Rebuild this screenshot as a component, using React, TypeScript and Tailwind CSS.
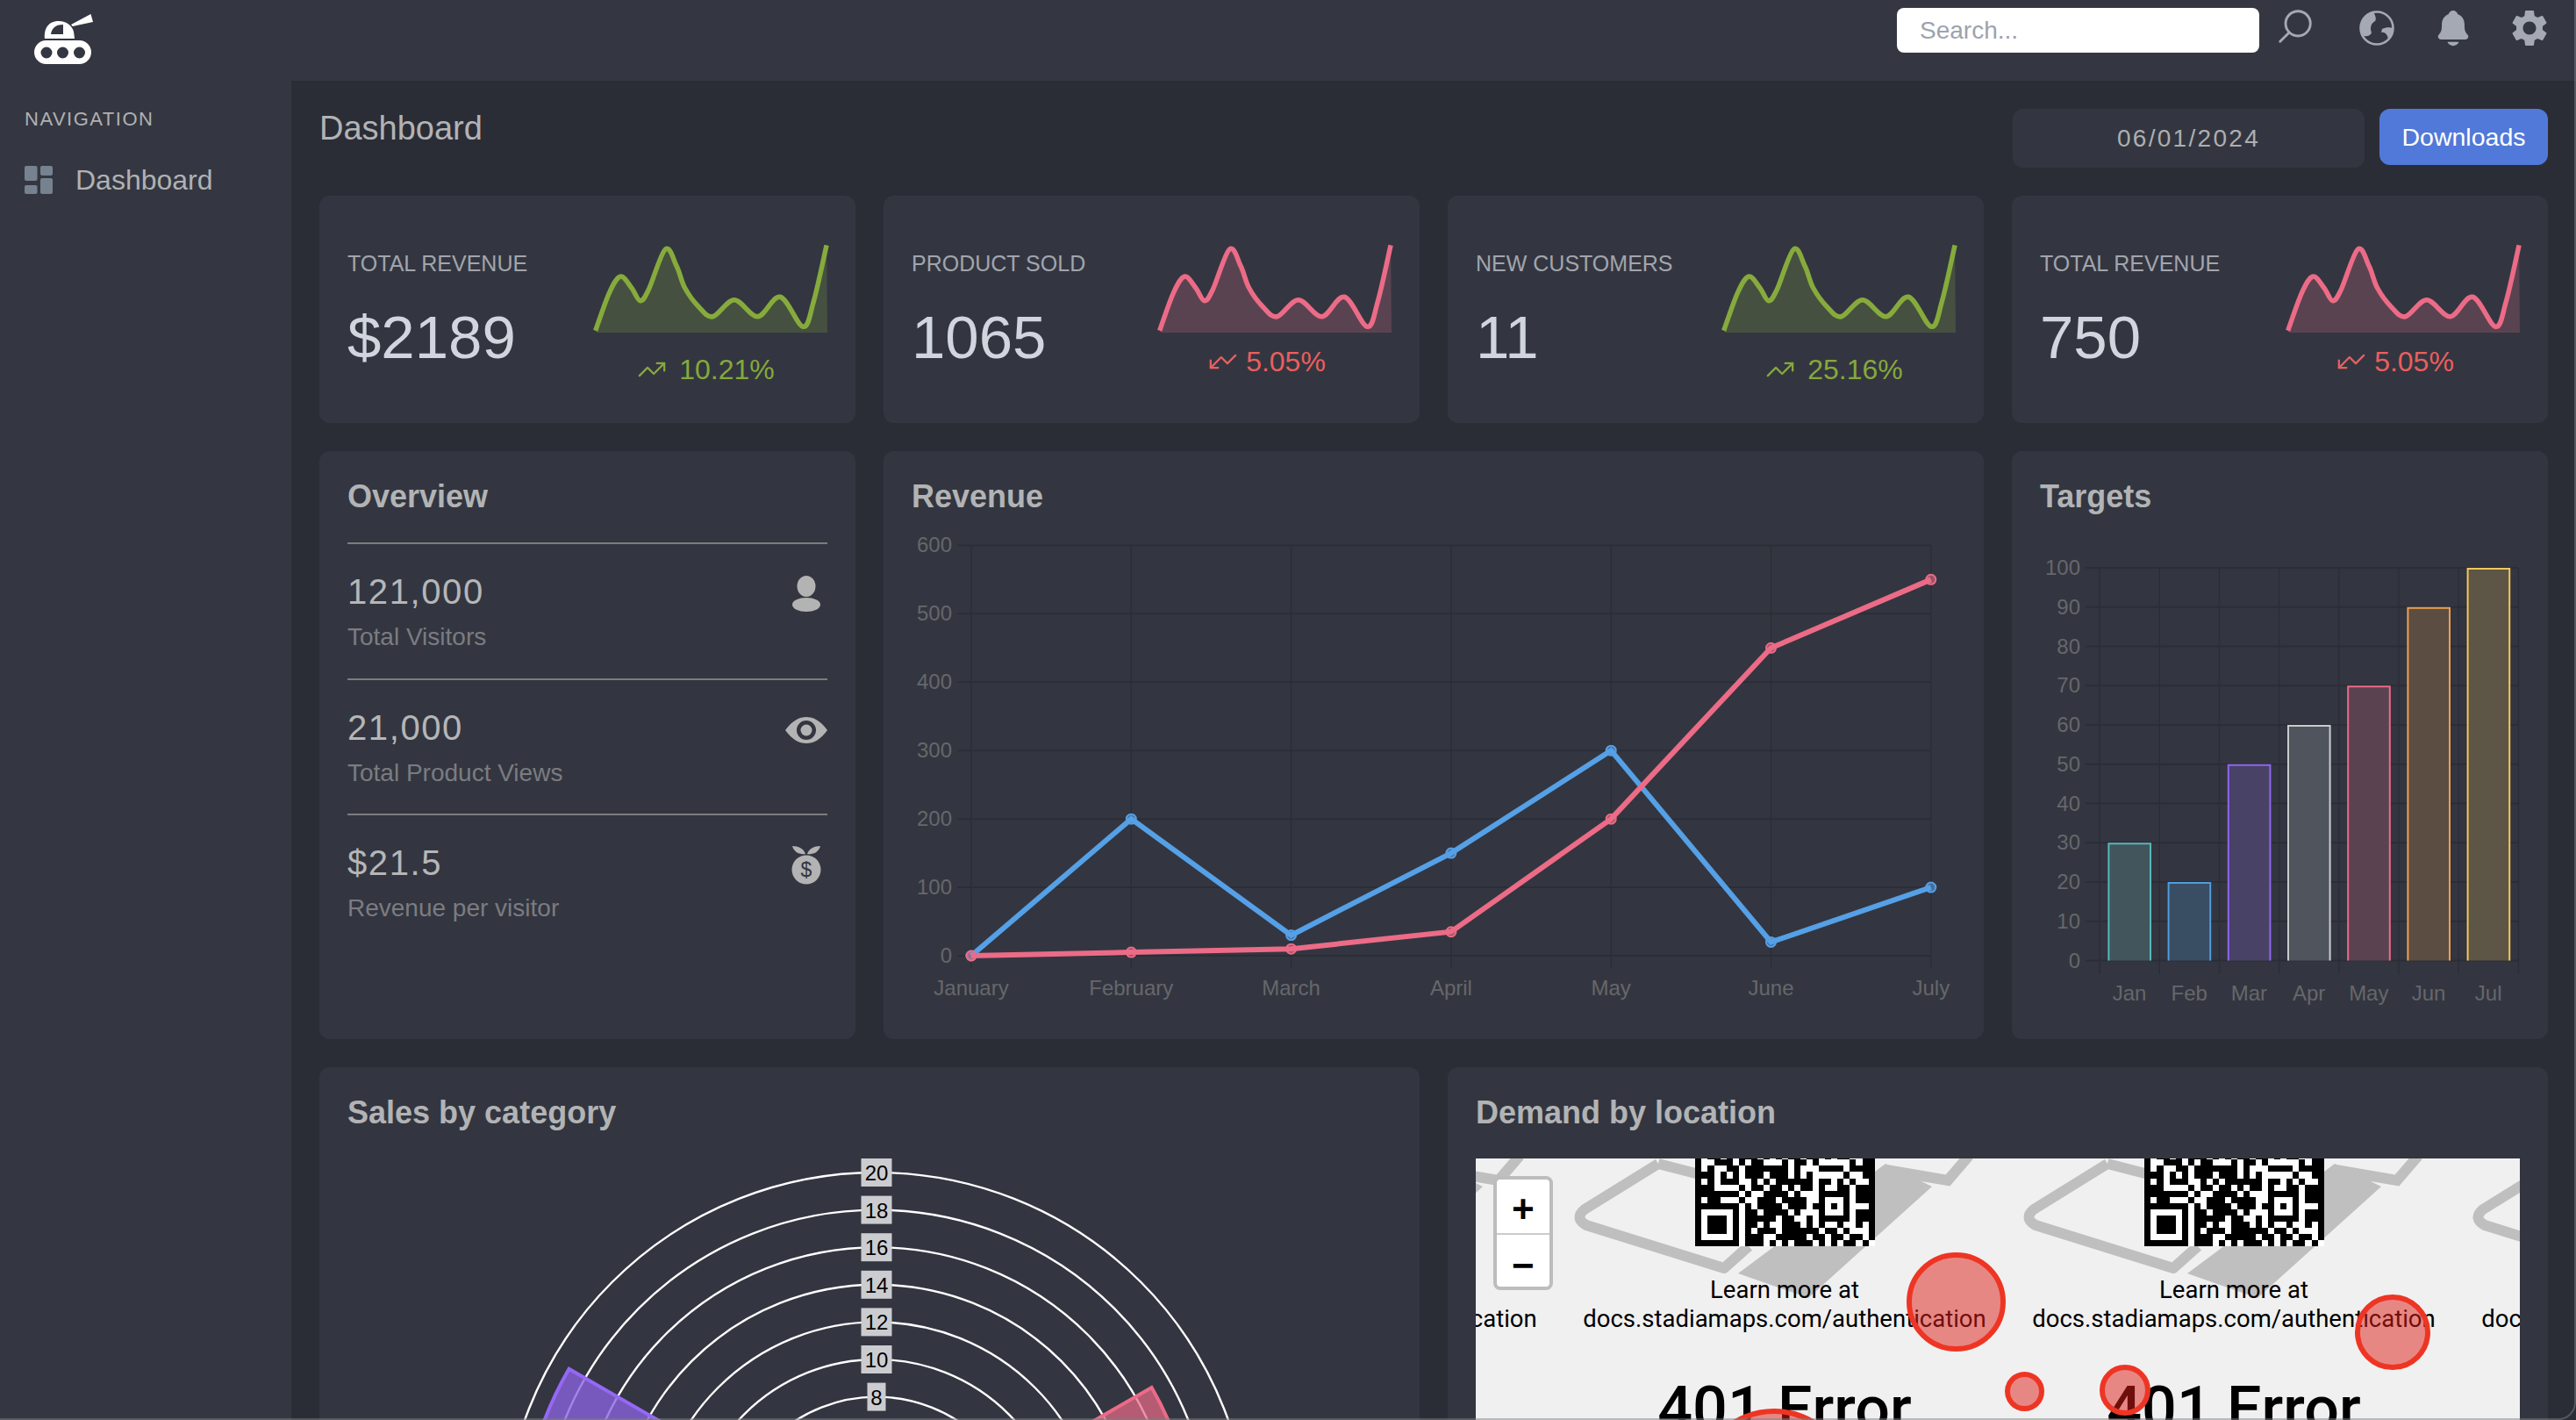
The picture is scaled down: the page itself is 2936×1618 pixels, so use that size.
import { TrendingUp } from "lucide-react";
import { IoNotifications, IoSearchOutline } from "react-icons/io5";
import { MdSettings } from "react-icons/md";

// sparkline shape, page coords of the first card
const spark: [number, number][] = [
    [678.7, 376.7], [694.6, 333.3], [707.4, 315], [720, 328.3], [729.7, 342.7], [739.3, 330],
    [758.4, 284], [771.2, 303.3], [780.7, 328.3], [796.7, 350], [812.6, 360.7], [836.9, 341.7],
    [863.6, 360.7], [889.2, 338.3], [915.3, 372.3], [927.4, 343.3], [942.1, 279.3],
];

function smooth(pts: [number, number][]) {
    let d = `M${pts[0][0]} ${pts[0][1]}`;
    for (let i = 0; i < pts.length - 1; i++) {
        const p0 = pts[Math.max(i - 1, 0)];
        const p1 = pts[i];
        const p2 = pts[i + 1];
        const p3 = pts[Math.min(i + 2, pts.length - 1)];
        const c1x = p1[0] + (p2[0] - p0[0]) / 6;
        const c1y = p1[1] + (p2[1] - p0[1]) / 6;
        const c2x = p2[0] - (p3[0] - p1[0]) / 6;
        const c2y = p2[1] - (p3[1] - p1[1]) / 6;
        d += ` C${c1x} ${c1y} ${c2x} ${c2y} ${p2[0]} ${p2[1]}`;
    }
    return d;
}

function Sparkline({ color, fill }: { color: string; fill: string }) {
    const line = smooth(spark);
    return (
        <svg viewBox="675 276 268 106" className="block w-[268px] h-[106px] overflow-visible">
            <path d={`${line} L943 379 L680 379 Z`} fill={fill} />
            <path d={line} fill="none" stroke={color} strokeWidth="5.5" strokeLinejoin="round" />
        </svg>
    );
}

function Logo() {
    return (
        <svg viewBox="38 16 68 58" className="w-[68px] h-[58px] text-white" fill="currentColor">
            <path d="M81 28 L103.5 16 L106 25 L82.6 30 Z" />
            <path fillRule="evenodd" d="M51 44 C50 34 54 24 67 24 C76 24 82 29 84 36 L85 44 Z M58 39 H72 V28 C65 28 59 31 58 39 Z" />
            <path fillRule="evenodd" d="M52.5 46 H90.5 A13.5 13.5 0 0 1 90.5 73 H52.5 A13.5 13.5 0 0 1 52.5 46 Z M53 53.5 A6.5 6.5 0 1 0 53 66.5 A6.5 6.5 0 1 0 53 53.5 Z M71.5 53.5 A6.5 6.5 0 1 0 71.5 66.5 A6.5 6.5 0 1 0 71.5 53.5 Z M90.5 53.5 A6.5 6.5 0 1 0 90.5 66.5 A6.5 6.5 0 1 0 90.5 53.5 Z" />
        </svg>
    );
}

function GlobeIcon() {
    return (
        <svg viewBox="0 0 40 40" className="w-[40px] h-[40px]" fill="#a5a9b3">
            <circle cx="20" cy="20" r="18.5" fill="none" stroke="#a5a9b3" strokeWidth="2.6" />
            <path d="M16 1 C8 2 1 10 1 20 C1 24 2 27 4 29 C8 30 13 29 14 25 C12 20 13 15 18 12 C20 10 18 5 16 1 Z" />
            <path d="M26 21 C30 19 35 19 39 20 C39 26 36 31 33 34 C33 29 30 24 25 25 Z" />
        </svg>
    );
}

function StatCard({ title, value, pct, up }: { title: string; value: string; pct: string; up: boolean }) {
    return (
        <div className="h-[259px] rounded-xl bg-[#333640] px-8 flex justify-between">
            <div className="pt-[61px]">
                <p className="text-[25px] leading-[32px] text-[#a2a5ad] whitespace-nowrap">{title}</p>
                <p className="mt-[29px] text-[69px] leading-[80px] text-[#d1d5de]">{value}</p>
            </div>
            <div className="pt-[53px] w-[268px] shrink-0">
                <Sparkline color={up ? "#86ab3c" : "#ec6b87"} fill={up ? "#465040" : "#5a4350"} />
                <div className={up ? "mt-[21px] flex items-center justify-center gap-[14px] text-[32px] leading-[36px] text-[#86a83c] pr-[9px]" : "mt-[12px] flex items-center justify-center gap-[9px] text-[32px] leading-[36px] text-[#e95f5f] pr-[16px]"}>
                    <TrendingUp className={up ? "w-[34px] h-[34px]" : "w-[34px] h-[34px] rotate-180"} strokeWidth={1.6} />
                    <span>{pct}</span>
                </div>
            </div>
        </div>
    );
}

function PersonIcon() {
    return (
        <svg viewBox="0 0 32 42" className="w-[32px] h-[42px]" fill="#b3b3b3">
            <ellipse cx="16" cy="12" rx="10.5" ry="12" />
            <ellipse cx="16" cy="33" rx="16" ry="8" />
        </svg>
    );
}

function EyeIcon() {
    return (
        <svg viewBox="0 0 48 30" className="w-[48px] h-[30px]" fill="#b3b3b3">
            <path fillRule="evenodd" d="M0 15 C8 4 16 0 24 0 C32 0 40 4 48 15 C40 26 32 30 24 30 C16 30 8 26 0 15 Z M24 4 A11 11 0 1 0 24 26 A11 11 0 1 0 24 4 Z" />
            <circle cx="24" cy="15" r="6.5" />
        </svg>
    );
}

function MedalIcon() {
    return (
        <svg viewBox="0 0 34 44" className="w-[34px] h-[44px]" fill="#b3b3b3">
            <path d="M1 0 C8 0 14 3 16 9 C9 10 3 7 1 0 Z" />
            <path d="M33 0 C26 0 20 3 18 9 C25 10 31 7 33 0 Z" />
            <circle cx="17" cy="27" r="16.5" />
            <text x="17" y="35" textAnchor="middle" fontSize="23" fill="#333640">$</text>
        </svg>
    );
}

function OverviewRow({ value, label, icon }: { value: string; label: string; icon: React.ReactNode }) {
    return (
        <div className="h-[154.5px] border-t-2 border-[#7c7d7d] pt-[32px] flex justify-between">
            <div>
                <p className="text-[40px] leading-[44px] tracking-[1.6px] text-[#b5b6b8]">{value}</p>
                <p className="mt-[12px] text-[28px] leading-[36px] text-[#7b7c80]">{label}</p>
            </div>
            <div className="w-[48px] h-[50px] flex items-center justify-center">{icon}</div>
        </div>
    );
}

const months = ["January", "February", "March", "April", "May", "June", "July"];
const blueData = [0, 200, 30, 150, 300, 20, 100];
const pinkData = [0, 5, 10, 35, 200, 450, 550];

function LineChart() {
    const x = (i: number) => 1107 + i * 182.3;
    const y = (v: number) => 1090 - (v / 600) * 467.6;
    const series: [number[], string][] = [[blueData, "#55a0e6"], [pinkData, "#ec6b87"]];
    return (
        <svg viewBox="1039 600 1190 550" className="block w-[1190px] h-[550px]">
            {[0, 100, 200, 300, 400, 500, 600].map((v) => (
                <g key={v}>
                    <line x1="1091" x2="2201" y1={y(v)} y2={y(v)} stroke="#2c2e37" strokeWidth="2" />
                    <text x="1085" y={y(v) + 8} textAnchor="end" fontSize="24" fill="#66676b">{v}</text>
                </g>
            ))}
            {months.map((m, i) => (
                <g key={m}>
                    <line x1={x(i)} x2={x(i)} y1="622" y2="1105" stroke="#2c2e37" strokeWidth="1.5" />
                    <text x={x(i)} y="1135" textAnchor="middle" fontSize="24" fill="#66676b">{m}</text>
                </g>
            ))}
            {series.map(([data, color]) => (
                <g key={color}>
                    <polyline points={data.map((v, i) => `${x(i)},${y(v)}`).join(" ")} fill="none" stroke={color} strokeWidth="6" />
                    {data.map((v, i) => (
                        <circle key={i} cx={x(i)} cy={y(v)} r="5.5" fill={color} fillOpacity="0.55" stroke={color} strokeWidth="2" />
                    ))}
                </g>
            ))}
        </svg>
    );
}

const bars = [
    { label: "Jan", value: 30, stroke: "#56b9b9", fill: "#42545c" },
    { label: "Feb", value: 20, stroke: "#4f9de0", fill: "#394d63" },
    { label: "Mar", value: 50, stroke: "#9166f0", fill: "#484267" },
    { label: "Apr", value: 60, stroke: "#c9cbcf", fill: "#50545d" },
    { label: "May", value: 70, stroke: "#ec6b87", fill: "#5a4250" },
    { label: "Jun", value: 90, stroke: "#f0a050", fill: "#5b4d42" },
    { label: "Jul", value: 100, stroke: "#f5c85a", fill: "#5d5546" },
];

function BarChart() {
    const step = 68.2;
    const y = (v: number) => 1095.5 - (v / 100) * 447.5;
    return (
        <svg viewBox="2325 620 547 530" className="block w-[547px] h-[530px]">
            {[0, 10, 20, 30, 40, 50, 60, 70, 80, 90, 100].map((v) => (
                <g key={v}>
                    <line x1="2377" x2="2870" y1={y(v)} y2={y(v)} stroke="#2c2e37" strokeWidth="2" />
                    <text x="2371" y={y(v) + 8} textAnchor="end" fontSize="24" fill="#66676b">{v}</text>
                </g>
            ))}
            {[0, 1, 2, 3, 4, 5, 6, 7].map((i) => (
                <line key={i} x1={2393 + i * step} x2={2393 + i * step} y1="648" y2="1111" stroke="#2c2e37" strokeWidth="1.5" />
            ))}
            {bars.map((b, i) => {
                const left = 2403.4 + i * step;
                const top = y(b.value) + 1;
                return (
                    <g key={b.label}>
                        <rect x={left} y={top} width="47.6" height={1095.5 - top} fill={b.fill} />
                        <path d={`M${left} 1095.5 V${top} H${left + 47.6} V1095.5`} fill="none" stroke={b.stroke} strokeWidth="2" />
                        <text x={2427 + i * step} y="1141" textAnchor="middle" fontSize="24" fill="#66676b">{b.label}</text>
                    </g>
                );
            })}
        </svg>
    );
}

function wedge(cx: number, cy: number, r: number, a0: number, a1: number) {
    const p = (a: number) => [cx + r * Math.sin((a * Math.PI) / 180), cy - r * Math.cos((a * Math.PI) / 180)];
    const [x0, y0] = p(a0);
    const [x1, y1] = p(a1);
    return `M${cx} ${cy} L${x0} ${y0} A${r} ${r} 0 0 1 ${x1} ${y1} Z`;
}

function PolarChart() {
    const cx = 999;
    const cy = 1763;
    const unit = 21.3;
    const rings = [8, 10, 12, 14, 16, 18, 20];
    return (
        <svg viewBox="364 1321 1254 880" className="block w-[1254px] h-[880px]">
            {rings.map((v) => (
                <circle key={v} cx={cx} cy={cy} r={v * unit} fill="none" stroke="#fff" strokeWidth="2.4" />
            ))}
            <path d={wedge(cx, cy, 19 * unit, -120, -60)} fill="#8a63e0" fillOpacity="0.78" stroke="#9568f5" strokeWidth="4" />
            <path d={wedge(cx, cy, 17 * unit, 60, 120)} fill="#e86a86" fillOpacity="0.72" stroke="#ec6b87" strokeWidth="4" />
            {rings.map((v) => {
                const w = v >= 10 ? 35 : 21;
                return (
                    <g key={v}>
                        <rect x={cx - w / 2} y={cy - v * unit - 16} width={w} height="32" fill="#cbccd0" />
                        <text x={cx} y={cy - v * unit + 9} textAnchor="middle" fontSize="24" fill="#000">{v}</text>
                    </g>
                );
            })}
        </svg>
    );
}

// rows of the visible part of the qr code in the map tile
const qrRows = [
    "#.##.#.###.#.#.##.##.#.##..##",
    "#..###.#.##...#.##.#.....#.##",
    "#.#..##.#######.#...####.####",
    "###.#.#.###.###.#.#.....#..##",
    "#.#.###..#.#.######.##.#.#..#",
    "###....#.##.##.#.##.#..##.###",
    "#######.#..####.#...#####.###",
    "#.##...#..###.####..#...#.###",
    "#######.#.####.###.##.#.#...#",
    "#.....#.##.####.#...#...#.###",
    "#.###.#.#####.##..#.#####.###",
    "#.###.#.##.#..###.#.#..#..#.#",
    "#.###.#.#.###.######.##.#...#",
    "#.....#.###..#####.##.##.##.#",
    "#######.###.#.#.###.#.#.##.#.",
];

function QrCode() {
    return (
        <svg viewBox="0 0 29 14.2" className="block w-[205px] h-[100px]" shapeRendering="crispEdges">
            <rect width="29" height="15" fill="#fff" />
            {qrRows.map((row, r) =>
                row.split("").map((c, i) =>
                    c === "#" ? <rect key={`${r}-${i}`} x={i} y={r - 0.8} width="1" height="1" fill="#000" /> : null
                )
            )}
        </svg>
    );
}

function MapTile() {
    return (
        <div className="relative w-[512px] h-[600px] shrink-0 flex flex-col items-center font-['Roboto',sans-serif] text-black">
            {/* stadia logo watermark behind the tile text */}
            <svg viewBox="0 0 512 300" className="absolute left-0 top-0 w-[512px] h-[300px]" fill="none">
                <path d="M112 6 L28 58 Q16 68 30 76 L187 125 L215 100" stroke="#bfbfbf" strokeWidth="12" strokeLinejoin="round" />
                <path d="M112 6 L205 30" stroke="#bfbfbf" strokeWidth="12" />
                <path d="M203 131 L283 159 L424 32 L371 6 Z" fill="#bfbfbf" />
                <path d="M372 13 L442 25 L466 -3" stroke="#bfbfbf" strokeWidth="12" />
            </svg>
            <div className="relative"><QrCode /></div>
            <p className="relative mt-[33px] text-[27.5px] leading-[33px] whitespace-nowrap">Learn more at</p>
            <p className="relative text-[27.5px] leading-[34px] whitespace-nowrap">docs.stadiamaps.com/authentication</p>
            <p className="relative mt-[45px] text-[70px] leading-[80px] font-medium whitespace-nowrap">401 Error</p>
        </div>
    );
}

const markers = [
    { left: 491, top: 107, size: 113 },
    { left: 1002, top: 155, size: 86 },
    { left: 603, top: 243, size: 45 },
    { left: 711, top: 235, size: 58 },
    { left: 250, top: 285, size: 180 },
];

function MapPanel() {
    return (
        <div className="relative w-[1190px] h-[800px] overflow-hidden bg-[#f0f0f0]">
            <div className="flex ml-[-416px]">
                <MapTile />
                <MapTile />
                <MapTile />
                <MapTile />
            </div>
            {markers.map((m) => (
                <div
                    key={m.left}
                    className="absolute rounded-full border-[6px] border-[#ee3524] bg-[#dd1d17]/50"
                    style={{ left: m.left, top: m.top, width: m.size, height: m.size }}
                />
            ))}
            <div className="absolute left-[20px] top-[20px] w-[68px] h-[130px] rounded-lg border-4 border-[#bdbdbd] bg-white flex flex-col font-['Liberation_Mono',monospace] font-bold text-[44px] text-black overflow-hidden">
                <div className="h-[63px] flex items-center justify-center border-b-2 border-[#cccccc] pt-[12px]">+</div>
                <div className="flex-1 flex items-center justify-center pt-[5px]">−</div>
            </div>
        </div>
    );
}

function CardTitle({ children }: { children: React.ReactNode }) {
    return <h3 className="text-[36px] leading-[44px] font-bold text-[#b2b3b5] whitespace-nowrap">{children}</h3>;
}

export default function App() {
    return (
        <div className="relative h-screen w-screen overflow-hidden flex flex-col bg-[#343741] font-['Liberation_Sans',sans-serif]">
            <header className="h-[92px] shrink-0 flex justify-between pl-[38px] pr-[28px]">
                <div className="pt-[16px]"><Logo /></div>
                <div className="flex pt-[9px]">
                    <input
                        placeholder="Search..."
                        className="w-[413px] h-[51px] rounded-lg bg-white pl-[26px] text-[28px] outline-none placeholder:text-[#9ca3af]"
                    />
                    <IoSearchOutline className="ml-[18px] mt-[-2px] w-[46px] h-[46px] -scale-x-100 text-[#a5a9b3]" />
                    <div className="ml-[50px] mt-[3px]"><GlobeIcon /></div>
                    <IoNotifications className="ml-[44px] mt-0 w-[46px] h-[46px] text-[#a5a9b3]" />
                    <MdSettings className="ml-[39px] mt-[-2px] w-[50px] h-[50px] text-[#a5a9b3]" />
                </div>
            </header>
            <div className="flex flex-1 min-h-0">
                <aside className="w-[332px] shrink-0 pl-[28px] pt-[30px]">
                    <p className="text-[22px] leading-[28px] tracking-[1.5px] text-[#b0b1b3]">NAVIGATION</p>
                    <div className="mt-[35px] flex items-center gap-[26px]">
                        <svg viewBox="0 0 32 32" className="w-[32px] h-[32px]" fill="#76828f">
                            <rect x="0" y="0" width="14.5" height="17" rx="2" />
                            <rect x="0" y="22" width="14.5" height="10" rx="2" />
                            <rect x="18" y="0" width="14" height="11" rx="2" />
                            <rect x="18" y="14" width="14" height="18" rx="2" />
                        </svg>
                        <span className="text-[32px] leading-[40px] text-[#b0b1b3]">Dashboard</span>
                    </div>
                </aside>
                <main className="flex-1 min-w-0 bg-[#2b2d36] px-8 pt-8">
                    <div className="h-[67px] flex justify-between">
                        <h2 className="text-[38px] leading-[44px] text-[#b2b3b5]">Dashboard</h2>
                        <div className="flex gap-[17px]">
                            <input
                                readOnly
                                value="06/01/2024"
                                className="w-[401px] h-[67px] rounded-xl bg-[#333640] text-center text-[28px] tracking-[2.3px] text-[#aeaeb0] outline-none"
                            />
                            <button className="w-[192px] h-[64px] rounded-xl bg-[#5179d9] text-[28.5px] text-white">Downloads</button>
                        </div>
                    </div>
                    <div className="mt-[32px] grid grid-cols-4 gap-8">
                        <StatCard title="TOTAL REVENUE" value="$2189" pct="10.21%" up />
                        <StatCard title="PRODUCT SOLD" value="1065" pct="5.05%" up={false} />
                        <StatCard title="NEW CUSTOMERS" value="11" pct="25.16%" up />
                        <StatCard title="TOTAL REVENUE" value="750" pct="5.05%" up={false} />
                    </div>
                    <div className="mt-[32px] grid grid-cols-4 gap-8">
                        <div className="h-[670px] rounded-xl bg-[#333640] px-8 pt-[30px]">
                            <CardTitle>Overview</CardTitle>
                            <div className="mt-[30px]">
                                <OverviewRow value="121,000" label="Total Visitors" icon={<PersonIcon />} />
                                <OverviewRow value="21,000" label="Total Product Views" icon={<EyeIcon />} />
                                <OverviewRow value="$21.5" label="Revenue per visitor" icon={<MedalIcon />} />
                            </div>
                        </div>
                        <div className="col-span-2 h-[670px] rounded-xl bg-[#333640] px-8 pt-[30px]">
                            <CardTitle>Revenue</CardTitle>
                            <div className="mt-[11px]"><LineChart /></div>
                        </div>
                        <div className="h-[670px] rounded-xl bg-[#333640] px-8 pt-[30px]">
                            <CardTitle>Targets</CardTitle>
                            <div className="mt-[31px]"><BarChart /></div>
                        </div>
                    </div>
                    <div className="mt-[32px] grid grid-cols-2 gap-8">
                        <div className="h-[1000px] rounded-xl bg-[#333640] pt-[30px]">
                            <div className="px-8"><CardTitle>Sales by category</CardTitle></div>
                            <div className="mt-[30px]"><PolarChart /></div>
                        </div>
                        <div className="h-[1000px] rounded-xl bg-[#333640] px-8 pt-[30px]">
                            <CardTitle>Demand by location</CardTitle>
                            <div className="mt-[30px]"><MapPanel /></div>
                        </div>
                    </div>
                </main>
            </div>
            {/* window edge visible in the capture */}
            <div className="absolute inset-0 pointer-events-none border-r-2 border-b-2 border-[#808186]/50 rounded-br-[20px]" />
        </div>
    );
}
